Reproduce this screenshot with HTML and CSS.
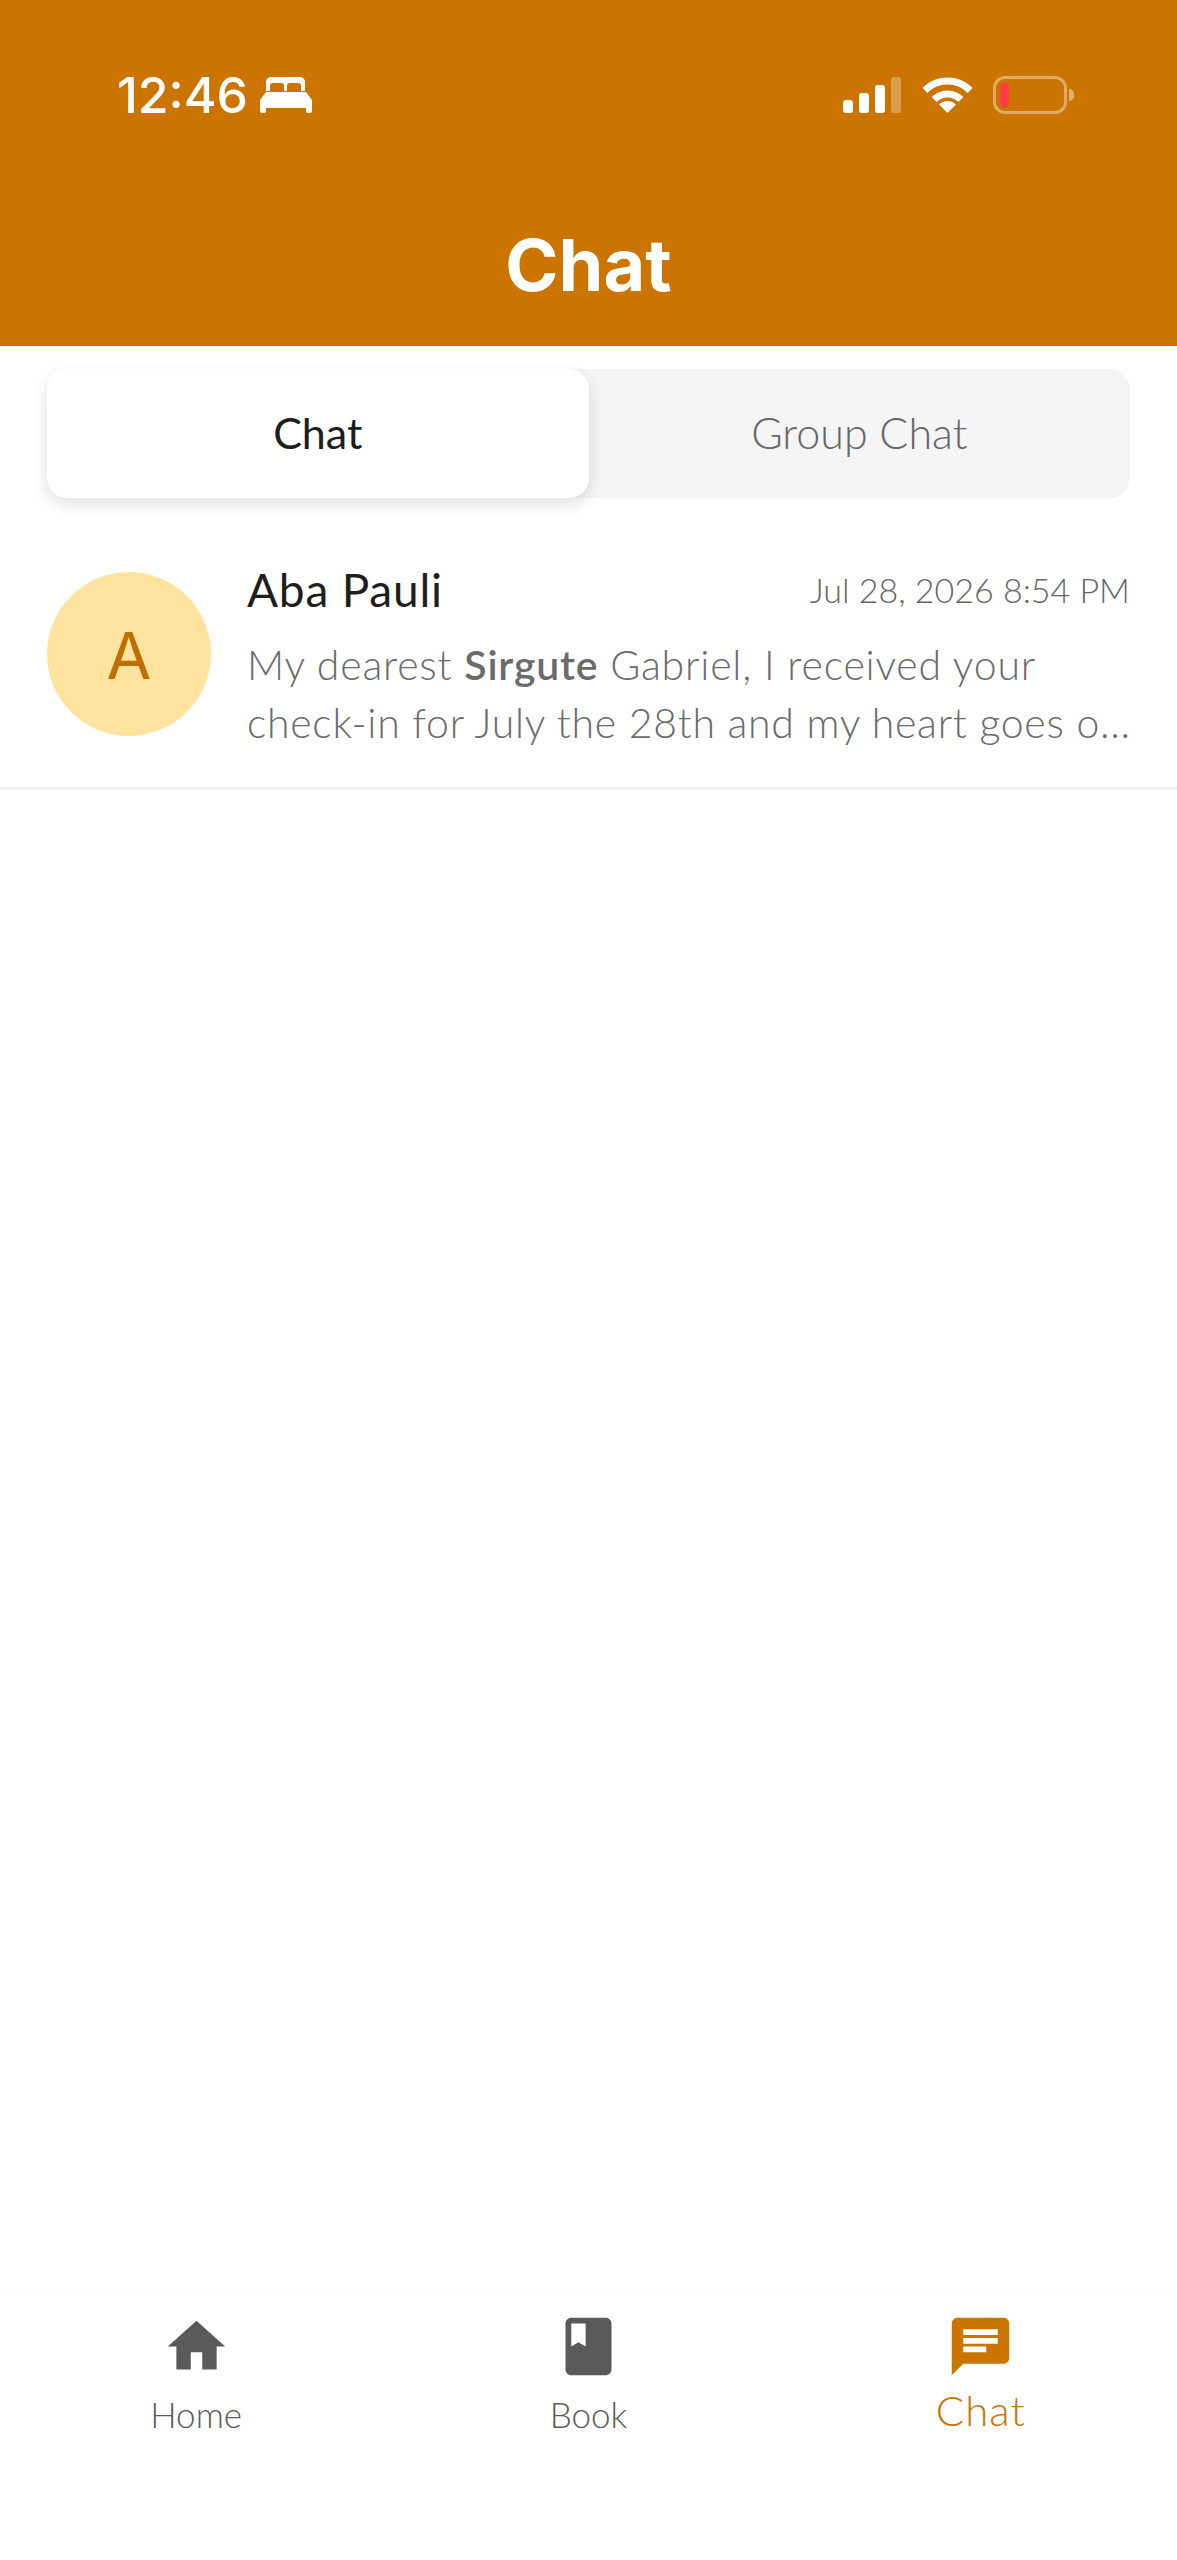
FILE: index.html
```html
<!DOCTYPE html>
<html lang="en">
<head>
    <meta charset="UTF-8">
    <meta name="viewport" content="width=device-width, initial-scale=1.0">
    <title>Chat</title>
    <link rel="stylesheet" href="styles.css">
</head>
<body>
    <div class="page">
        <!-- Header with status bar -->
        <header class="header">
            <div class="status-bar">
                <div class="status-left">
                    <span class="clock">12:46</span>
                    <svg class="bed-icon" width="52" height="36" viewBox="0 0 52 36">
                        <path fill="#fff" d="M6 14V5a5 5 0 0 1 5-5h29a5 5 0 0 1 5 5v9h-4v-5a3 3 0 0 0-3-3H30a3 3 0 0 0-3 3v5h-3V9a3 3 0 0 0-3-3h-8a3 3 0 0 0-3 3v5z"/>
                        <path fill="#fff" d="M6 15h40l6 8v11a2 2 0 0 1-2 2h-2a2 2 0 0 1-2-2v-3H6v3a2 2 0 0 1-2 2H2a2 2 0 0 1-2-2V23z"/>
                    </svg>
                </div>
                <div class="status-right">
                    <div class="signal">
                        <span class="bar bar-1"></span>
                        <span class="bar bar-2"></span>
                        <span class="bar bar-3"></span>
                        <span class="bar bar-4"></span>
                    </div>
                    <svg class="wifi-icon" width="49" height="36" viewBox="0 0 49 36">
                        <path fill="none" stroke="#fff" stroke-width="7" d="M1.9 13.4A32 32 0 0 1 47.1 13.4"/>
                        <path fill="none" stroke="#fff" stroke-width="7" d="M11.1 22.6A19 19 0 0 1 37.9 22.6"/>
                        <path fill="#fff" d="M24.5 36L16 27.5A12 12 0 0 1 33 27.5z"/>
                    </svg>
                    <div class="battery">
                        <div class="battery-body"><span class="battery-level"></span></div>
                        <span class="battery-cap"></span>
                    </div>
                </div>
            </div>
            <h1 class="title">Chat</h1>
        </header>

        <!-- Tabs -->
        <div class="tabs">
            <div class="tab tab-active">Chat</div>
            <div class="tab">Group Chat</div>
        </div>

        <!-- Chat list -->
        <main class="chat-list">
            <div class="chat-row">
                <div class="avatar">A</div>
                <div class="chat-body">
                    <div class="chat-top">
                        <span class="chat-name">Aba Pauli</span>
                        <span class="chat-date">Jul 28, 2026 8:54 PM</span>
                    </div>
                    <div class="chat-line chat-line-first">My dearest <b>Sirgute</b> Gabriel, I received your</div>
                    <div class="chat-line">check-in for July the 28th and my heart goes o...</div>
                </div>
            </div>
        </main>

        <!-- Bottom nav -->
        <nav class="bottom-nav">
            <div class="nav-item">
                <svg class="nav-icon" viewBox="0 0 24 24"><path d="M10 20v-6h4v6h5v-8h3L12 3 2 12h3v8z"/></svg>
                <span class="nav-label">Home</span>
            </div>
            <div class="nav-item">
                <svg class="nav-icon" viewBox="0 0 24 24"><path d="M18 2H6c-1.1 0-2 .9-2 2v16c0 1.1.9 2 2 2h12c1.1 0 2-.9 2-2V4c0-1.1-.9-2-2-2zM6 4h5v8l-2.5-1.5L6 12V4z"/></svg>
                <span class="nav-label">Book</span>
            </div>
            <div class="nav-item nav-active">
                <svg class="nav-icon" viewBox="0 0 24 24"><path d="M20 2H4c-1.1 0-1.99.9-1.99 2L2 22l4-4h14c1.1 0 2-.9 2-2V4c0-1.1-.9-2-2-2zM6 9h12v2H6V9zm8 5H6v-2h8v2zm4-6H6V6h12v2z"/></svg>
                <span class="nav-label">Chat</span>
            </div>
        </nav>
    </div>
</body>
</html>
```

FILE: styles.css
```css
* {
    box-sizing: border-box;
}
body {
    margin: 0;
    font-family: "Lato", sans-serif;
    background-color: #fff;
}
.page {
    height: 2560px;
    display: flex;
    flex-direction: column;
}
.header {
    height: 346px;
    background-color: #cc7400;
    color: #fff;
    padding-top: 76px;
}
.status-bar {
    height: 38px;
    display: flex;
    justify-content: space-between;
    padding: 0 103px 0 117px;
}
.status-left {
    display: flex;
    align-items: center;
    gap: 12px;
}
.clock {
    font-family: "Inter", sans-serif;
    font-size: 50px;
    font-weight: 500;
    line-height: 38px;
}
.bed-icon {
    display: block;
}
.status-right {
    display: flex;
    align-items: center;
}
.signal {
    display: flex;
    align-items: flex-end;
    gap: 6px;
    height: 36px;
    margin-right: 22px;
}
.bar {
    width: 10px;
    background-color: #fff;
    border-radius: 3px;
}
.bar-1 { height: 13px; }
.bar-2 { height: 20px; }
.bar-3 { height: 28px; }
.bar-4 { height: 36px; opacity: 0.3; }
.wifi-icon {
    display: block;
    margin-right: 21px;
}
.battery {
    display: flex;
    align-items: center;
    gap: 2px;
}
.battery-body {
    width: 74px;
    height: 38px;
    border: 3px solid rgba(255, 255, 255, 0.4);
    border-radius: 12px;
    padding: 4px;
}
.battery-level {
    display: block;
    width: 9px;
    height: 100%;
    background-color: #ff3b47;
    border-radius: 4px;
}
.battery-cap {
    width: 5px;
    height: 12px;
    background-color: rgba(255, 255, 255, 0.45);
    border-radius: 0 6px 6px 0;
}
.title {
    margin: 0;
    padding-top: 115px;
    font-family: "Inter", sans-serif;
    font-size: 72px;
    font-weight: 700;
    line-height: 72px;
    text-align: center;
}
.tabs {
    margin: 23px 47px 0;
    height: 129px;
    display: flex;
    background-color: #f5f5f5;
    border-radius: 20px;
}
.tab {
    flex: 1;
    display: flex;
    align-items: center;
    justify-content: center;
    font-size: 43px;
    font-weight: 300;
    color: #666;
    padding-bottom: 2px;
}
.tab-active {
    background-color: #fff;
    border-radius: 20px;
    color: #1e1e1e;
    font-weight: 400;
    box-shadow: 0 6px 16px rgba(0, 0, 0, 0.12);
}
.chat-list {
    flex: 1;
}
.chat-row {
    height: 292px;
    border-bottom: 3px solid #f0f0f0;
    display: flex;
    padding: 61px 47px 0;
    gap: 36px;
}
.avatar {
    width: 164px;
    height: 164px;
    flex-shrink: 0;
    margin-top: 13px;
    padding-top: 2px;
    border-radius: 50%;
    background-color: #ffe39f;
    color: #bf6f00;
    font-family: "Inter", sans-serif;
    font-size: 65px;
    font-weight: 400;
    display: flex;
    align-items: center;
    justify-content: center;
}
.chat-body {
    flex: 1;
    min-width: 0;
}
.chat-top {
    display: flex;
    justify-content: space-between;
    align-items: center;
    height: 60px;
    margin-bottom: 17px;
}
.chat-name {
    font-size: 46px;
    letter-spacing: 0.8px;
    color: #1e1e1e;
}
.chat-date {
    font-size: 34px;
    font-weight: 300;
    color: #666;
}
.chat-line {
    font-size: 41px;
    font-weight: 300;
    letter-spacing: 0.7px;
    line-height: 58px;
    color: #6b6b6b;
    white-space: nowrap;
}
.chat-line-first {
    letter-spacing: 0.8px;
}
.chat-line b {
    font-weight: 600;
}
.bottom-nav {
    height: 271px;
    display: flex;
    padding-top: 22px;
    border-top: 1px solid #fafafa;
}
.nav-item {
    flex: 1;
    display: flex;
    flex-direction: column;
    align-items: center;
    fill: #5a5a5a;
    color: #5a5a5a;
}
.nav-icon {
    width: 69px;
    height: 69px;
    display: block;
}
.nav-label {
    font-size: 35px;
    font-weight: 300;
    line-height: 44px;
    margin-top: 11px;
}
.nav-active {
    fill: #cc7400;
    color: #cc7400;
}
.nav-active .nav-label {
    font-size: 42px;
    letter-spacing: 1px;
    margin-top: 7px;
}
```
